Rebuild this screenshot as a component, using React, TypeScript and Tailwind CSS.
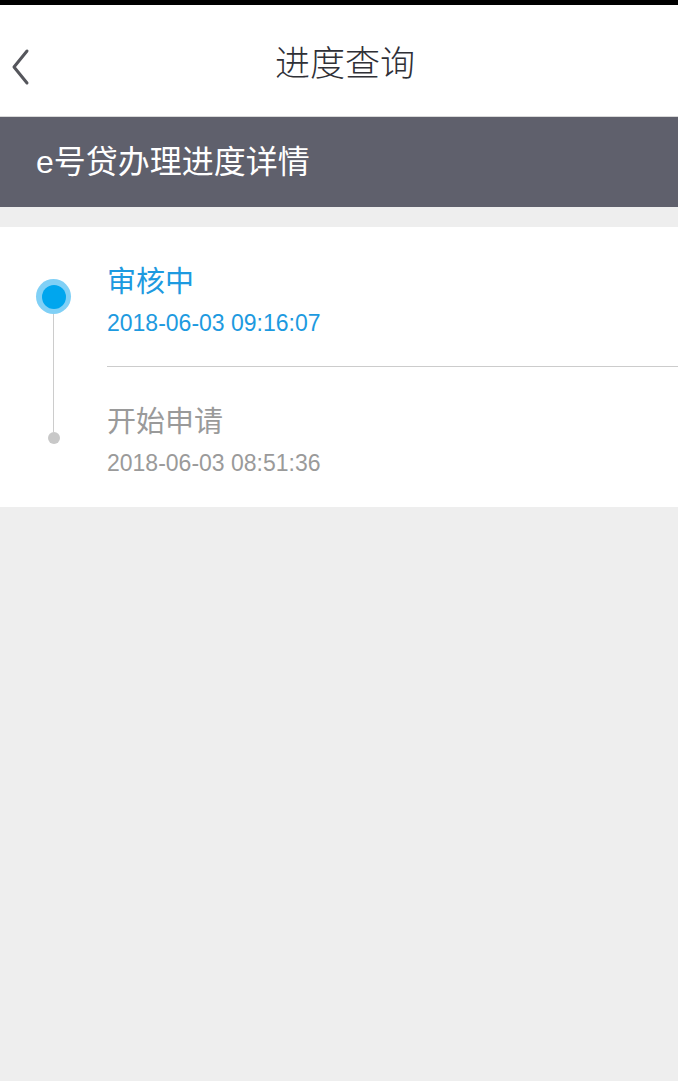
const font = { fontFamily: '"Liberation Sans", "Noto Sans CJK SC", sans-serif' };

const steps = [
  { title: "审核中", time: "2018-06-03 09:16:07", active: true },
  { title: "开始申请", time: "2018-06-03 08:51:36", active: false },
];

export default function App() {
  return (
    <div className="min-h-[1081px] bg-[#eeeeee]" style={font}>
      <div className="h-[5px] bg-black" />

      {/* top nav */}
      <div className="relative flex h-[112px] items-center justify-center border-b border-[#d9d9d9] bg-white pt-[6px]">
        <button className="absolute left-[10px] top-[42px] p-0">
          <svg width="22" height="40" viewBox="0 0 22 40" fill="none">
            <polyline
              points="17,4 4,20 17,36"
              stroke="#55565c"
              strokeWidth="3"
              strokeLinecap="round"
              strokeLinejoin="round"
            />
          </svg>
        </button>
        <h1 className="ml-[12px] text-[35px] font-light leading-none text-[#2f3036]">进度查询</h1>
      </div>

      {/* section bar */}
      <div className="flex h-[90px] items-center bg-[#5f606c] pl-[36px]">
        <span className="text-[32px] leading-none text-white">e号贷办理进度详情</span>
      </div>

      {/* timeline card */}
      <div className="mt-[20px] bg-white">
        {steps.map((s, i) => (
          <div key={i} className="flex">
            <div className="flex w-[107px] shrink-0 flex-col items-center">
              {s.active ? (
                <>
                  <div className="h-[52px]" />
                  <div className="flex h-[35px] w-[35px] items-center justify-center rounded-full bg-[#80d0f6]">
                    <div className="h-[24px] w-[24px] rounded-full bg-[#00a6ee]" />
                  </div>
                  <div className="w-px flex-1 bg-[#cccccc]" />
                </>
              ) : (
                <>
                  <div className="h-[65px] w-px bg-[#cccccc]" />
                  <div className="h-[12px] w-[12px] rounded-full bg-[#c8c8c8]" />
                  <div className="flex-1" />
                </>
              )}
            </div>
            <div
              className={`flex-1 pt-[37px] ${
                i === 0 ? "border-b border-[#cccccc] pb-[28px]" : "pb-[29px]"
              }`}
            >
              <div
                className={`text-[29px] leading-[36px] ${
                  s.active ? "text-[#1d9ae0]" : "text-[#9a9a9a]"
                }`}
              >
                {s.title}
              </div>
              <div
                className={`mt-[8px] text-[23px] leading-[30px] ${
                  s.active ? "text-[#1d9ae0]" : "text-[#9a9a9a]"
                }`}
              >
                {s.time}
              </div>
            </div>
          </div>
        ))}
      </div>
    </div>
  );
}
